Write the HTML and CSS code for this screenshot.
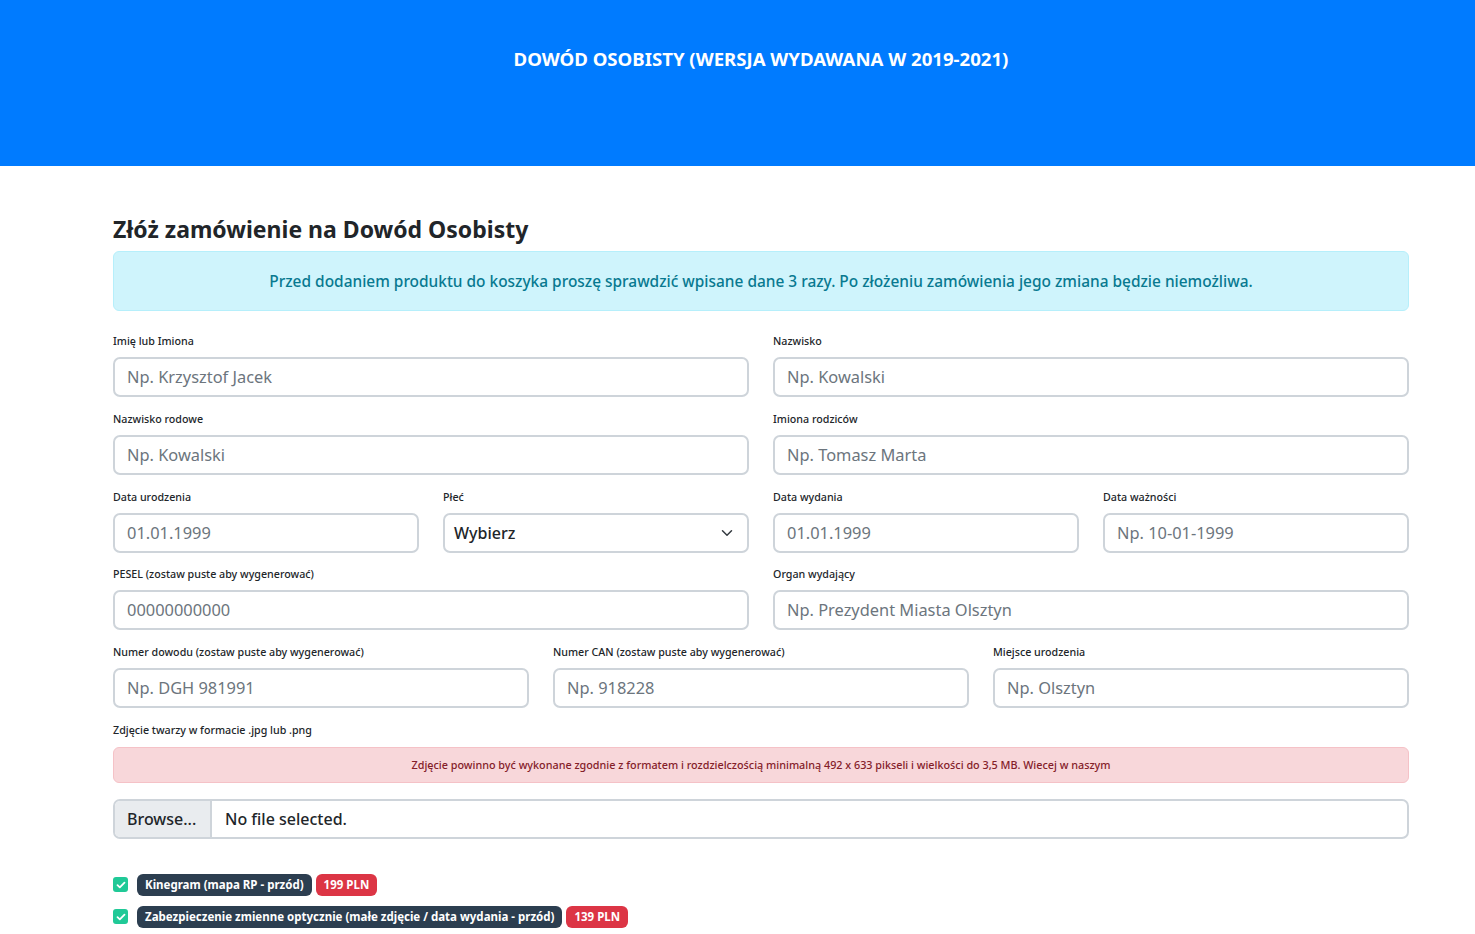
FILE: index.html
```html
<!DOCTYPE html>
<html lang="pl">
<head>
    <meta charset="UTF-8">
    <meta name="viewport" content="width=device-width, initial-scale=1.0">
    <title>Dowód Osobisty - zamówienie</title>
    <link rel="stylesheet" href="styles.css">
</head>
<body>
    <header>
        <div class="wrap">
            <h1>DOWÓD OSOBISTY (WERSJA WYDAWANA W 2019-2021)</h1>
        </div>
    </header>
    <main class="wrap">
        <h2>Złóż zamówienie na Dowód Osobisty</h2>
        <div class="alert alert-info">Przed dodaniem produktu do koszyka proszę sprawdzić wpisane dane 3 razy. Po złożeniu zamówienia jego zmiana będzie niemożliwa.</div>

        <div class="row">
            <div class="field">
                <label>Imię lub Imiona</label>
                <input type="text" placeholder="Np. Krzysztof Jacek">
            </div>
            <div class="field">
                <label>Nazwisko</label>
                <input type="text" placeholder="Np. Kowalski">
            </div>
        </div>
        <div class="row">
            <div class="field">
                <label>Nazwisko rodowe</label>
                <input type="text" placeholder="Np. Kowalski">
            </div>
            <div class="field">
                <label>Imiona rodziców</label>
                <input type="text" placeholder="Np. Tomasz Marta">
            </div>
        </div>
        <div class="row">
            <div class="field">
                <label>Data urodzenia</label>
                <input type="text" placeholder="01.01.1999">
            </div>
            <div class="field">
                <label>Płeć</label>
                <div class="select">
                    <span>Wybierz</span>
                    <svg width="12" height="8" viewBox="0 0 12 8"><path d="M1.5 1.8 6 6.2l4.5-4.4" fill="none" stroke="#343a40" stroke-width="1.5" stroke-linecap="round" stroke-linejoin="round"/></svg>
                </div>
            </div>
            <div class="field">
                <label>Data wydania</label>
                <input type="text" placeholder="01.01.1999">
            </div>
            <div class="field">
                <label>Data ważności</label>
                <input type="text" placeholder="Np. 10-01-1999">
            </div>
        </div>
        <div class="row">
            <div class="field">
                <label>PESEL (zostaw puste aby wygenerować)</label>
                <input type="text" placeholder="00000000000">
            </div>
            <div class="field">
                <label>Organ wydający</label>
                <input type="text" placeholder="Np. Prezydent Miasta Olsztyn">
            </div>
        </div>
        <div class="row">
            <div class="field">
                <label>Numer dowodu (zostaw puste aby wygenerować)</label>
                <input type="text" placeholder="Np. DGH 981991">
            </div>
            <div class="field">
                <label>Numer CAN (zostaw puste aby wygenerować)</label>
                <input type="text" placeholder="Np. 918228">
            </div>
            <div class="field">
                <label>Miejsce urodzenia</label>
                <input type="text" placeholder="Np. Olsztyn">
            </div>
        </div>

        <label class="photo-label">Zdjęcie twarzy w formacie .jpg lub .png</label>
        <div class="alert alert-danger">Zdjęcie powinno być wykonane zgodnie z formatem i rozdzielczością minimalną 492 x 633 pikseli i wielkości do 3,5 MB. Wiecej w naszym</div>
        <div class="file">
            <span class="file-btn">Browse...</span>
            <span class="file-name">No file selected.</span>
        </div>

        <div class="options">
            <div class="option">
                <span class="check"><svg width="10" height="8" viewBox="0 0 10 8"><path d="M1.5 4.2 3.8 6.3 8.5 1.7" fill="none" stroke="#fff" stroke-width="1.8" stroke-linecap="round" stroke-linejoin="round"/></svg></span>
                <span class="badge badge-dark">Kinegram (mapa RP - przód)</span>
                <span class="badge badge-red">199 PLN</span>
            </div>
            <div class="option">
                <span class="check"><svg width="10" height="8" viewBox="0 0 10 8"><path d="M1.5 4.2 3.8 6.3 8.5 1.7" fill="none" stroke="#fff" stroke-width="1.8" stroke-linecap="round" stroke-linejoin="round"/></svg></span>
                <span class="badge badge-dark">Zabezpieczenie zmienne optycznie (małe zdjęcie / data wydania - przód)</span>
                <span class="badge badge-red">139 PLN</span>
            </div>
        </div>
    </main>
</body>
</html>
```
FILE: styles.css
```css
body {
    margin: 0;
    font-family: "Noto Sans", "Open Sans", sans-serif;
    color: #212529;
    background: #fff;
}
.wrap {
    width: 1296px;
    margin-left: 113px;
}
header {
    background: #007bff;
    height: 166px;
}
header h1 {
    margin: 0;
    padding-top: 47px;
    text-align: center;
    color: #fff;
    font-size: 18.6px;
    font-weight: 700;
    line-height: 24px;
}
main {
    padding-top: 49px;
}
h2 {
    margin: 0 0 7px;
    font-size: 23px;
    line-height: 29px;
    font-weight: 700;
}
.alert {
    text-align: center;
    border-radius: 6px;
}
.alert-info {
    height: 58px;
    line-height: 58px;
    background: #cff4fc;
    border: 1px solid #b6effb;
    color: #087990;
    font-size: 15.45px;
    font-weight: 500;
    margin-bottom: 22px;
}
.alert-danger {
    height: 34px;
    line-height: 34px;
    background: #f8d7da;
    border: 1px solid #f5c2c7;
    color: #842029;
    font-size: 10.8px;
    font-weight: 500;
    margin-bottom: 16px;
}
.row {
    display: flex;
    gap: 24px;
    margin-bottom: 13.75px;
}
.field {
    flex: 1;
    display: flex;
    flex-direction: column;
}
label {
    display: block;
    font-size: 10.7px;
    line-height: 16px;
    font-weight: 500;
    margin-bottom: 8px;
}
.photo-label {
    margin-bottom: 9px;
}
input, .select {
    box-sizing: border-box;
    height: 40px;
    border: 2px solid #ced4da;
    border-radius: 7px;
    padding: 0 12px 1px;
    font-family: inherit;
    font-size: 16.4px;
    color: #212529;
    outline: none;
}
input::placeholder {
    color: #6c757d;
}
.select {
    display: flex;
    align-items: center;
    justify-content: space-between;
    padding: 0 14px 0 9px;
    font-size: 16px;
    font-weight: 500;
}
.file {
    box-sizing: border-box;
    display: flex;
    height: 40px;
    border: 2px solid #ced4da;
    border-radius: 7px;
    overflow: hidden;
    font-size: 16px;
    font-weight: 500;
}
.file-btn {
    width: 97px;
    background: #e9ecef;
    border-right: 2px solid #ced4da;
    padding-left: 12px;
    box-sizing: border-box;
    line-height: 36px;
}
.file-name {
    padding-left: 13px;
    line-height: 36px;
}
.options {
    margin-top: 35px;
}
.option {
    display: flex;
    align-items: center;
    gap: 4px;
    height: 22px;
    margin-bottom: 10px;
}
.check {
    width: 15px;
    height: 15px;
    border-radius: 3px;
    background: #20c997;
    display: flex;
    align-items: center;
    justify-content: center;
    margin-right: 5px;
}
.badge {
    height: 22px;
    line-height: 22px;
    padding: 0 8px;
    border-radius: 6px;
    color: #fff;
    font-size: 11.5px;
    font-weight: 700;
}
.badge-dark {
    background: #2c3e50;
}
.badge-red {
    background: #dc3545;
}
```
